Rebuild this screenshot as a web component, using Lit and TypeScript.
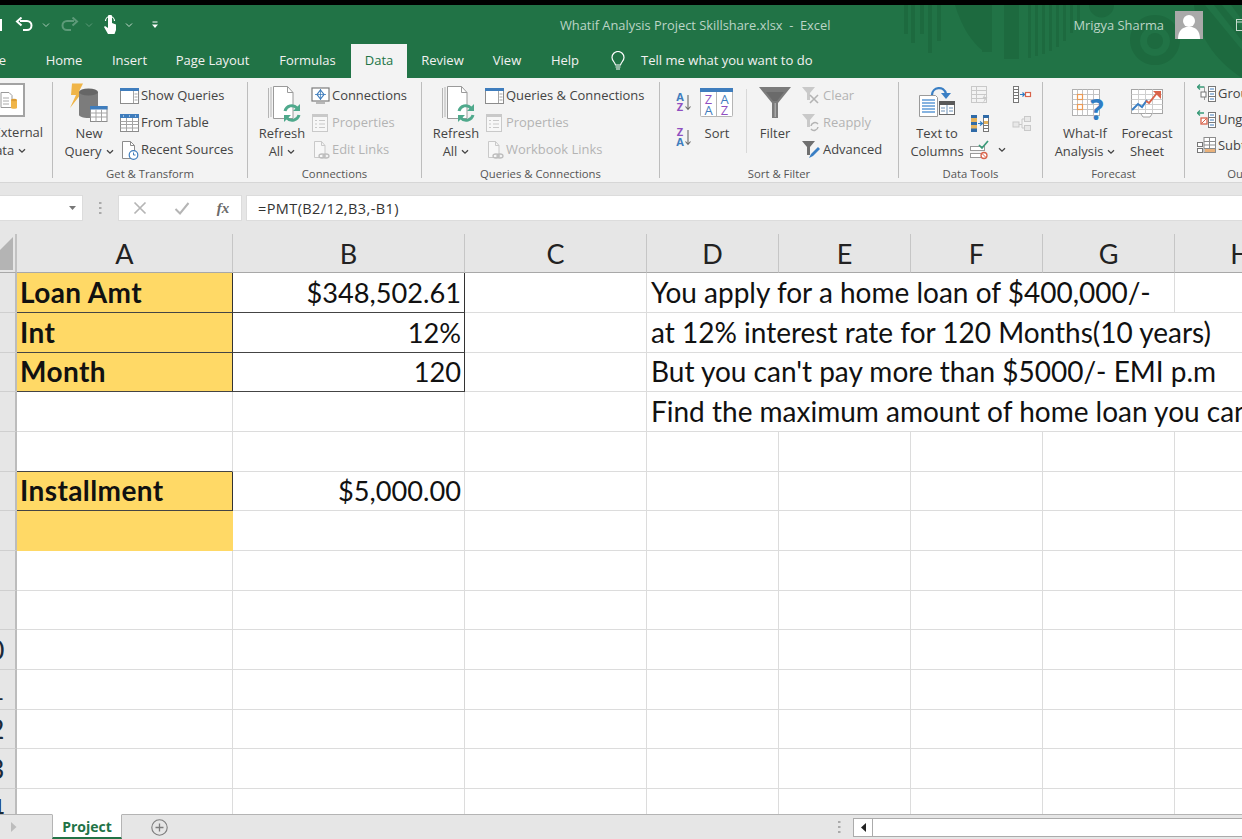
import { LitElement, html, css, svg } from "lit";
import { customElement } from "lit/decorators.js";

const chev = (c = "#444") => html`<svg class="chev" width="8" height="6" viewBox="0 0 8 6"><path d="M1 1.2 4 4.2 7 1.2" fill="none" stroke="${c}" stroke-width="1.3"/></svg>`;
const sm = (body: unknown) => html`<svg class="sm" width="20" height="20" viewBox="0 0 20 20">${body}</svg>`;
const big = (body: unknown) => html`<svg class="bigi" width="40" height="40" viewBox="0 0 40 40">${body}</svg>`;

const B = "#3f7dbd", G = "#8c8c8c", L = "#c9c9c9";

const icons: Record<string, unknown> = {
  showQueries: sm(svg`<rect x=".5" y="2.5" width="18" height="15" fill="#fff" stroke="${G}"/><rect y="2" width="19" height="3" fill="${B}"/><path d="M13.5 5v12M14.5 8h3M14.5 11h3M14.5 14h3" stroke="#a5a5a5" fill="none"/>`),
  fromTable: sm(svg`<rect x=".5" y="1.5" width="18" height="17" fill="#fff" stroke="${G}"/><rect y="1" width="19" height="4" fill="${B}"/><path d="M3 3h1M9 3h1M15 3h1" stroke="#fff"/><path d="M.5 8.5h18M.5 11.5h18M.5 15h18M6.5 5v13M12.5 5v13" stroke="#a5a5a5" fill="none"/>`),
  recent: sm(svg`<path d="M2.5 1.5h8l4 4v13h-12z" fill="#fff" stroke="${G}"/><path d="M10.5 1.5v4h4" fill="none" stroke="${G}"/><circle cx="13.5" cy="15" r="4.3" fill="#fff" stroke="${B}" stroke-width="1.2"/><path d="M13.5 12.5V15h2" stroke="${B}" fill="none"/>`),
  connections: sm(svg`<rect x="1" y="2" width="17" height="13" fill="#fff" stroke="#7d7d7d" stroke-width="1.2"/><path d="M9.5 4l3.5 4.5-3.5 4.5L6 8.5z" fill="#fff" stroke="${B}" stroke-width="1.2"/><path d="M9.5 3v11M4 8.5h11" stroke="${B}" stroke-width=".8"/><path d="M5 17h9" stroke="#7d7d7d"/>`),
  properties: sm(svg`<rect x="1.5" y="1.5" width="15" height="17" fill="#f7f7f7" stroke="${L}"/><rect x="1" y="1" width="16" height="3" fill="${L}"/><path d="M4 7.5h2M8 7.5h6M4 11h2M8 11h6M4 14.5h2M8 14.5h6" stroke="${L}"/>`),
  links: sm(svg`<path d="M3.5 1.5h7l3.5 4v12h-10.5z" fill="#f7f7f7" stroke="${L}"/><path d="M10.5 1.5v4h3.5" fill="none" stroke="${L}"/><ellipse cx="11" cy="16" rx="3" ry="2" fill="none" stroke="#bdbdbd" stroke-width="1.3"/><ellipse cx="15" cy="16" rx="3" ry="2" fill="none" stroke="#bdbdbd" stroke-width="1.3"/>`),
  clear: sm(svg`<path d="M0 1h13l-5 6v7H5V7z" fill="${L}"/><path d="M8 9l8 8M16 9l-8 8" stroke="#b3b3b3" stroke-width="1.6"/>`),
  reapply: sm(svg`<path d="M0 1h13l-5 6v7H5V7z" fill="${L}"/><path d="M9 13a4 4 0 0 1 7-2M16 14a4 4 0 0 1-7 2" fill="none" stroke="#b3b3b3" stroke-width="1.5"/>`),
  advanced: sm(svg`<path d="M0 1h13l-5 6v8H5V7z" fill="#6f6f6f"/><path d="M7 18l2-4 7-7 2 2-7 7z" fill="#3a7fc4"/>`),
  flash: sm(svg`<rect x="1.5" y=".5" width="15" height="16" fill="#f3f3f3" stroke="${L}"/><path d="M1.5 4.5h15M1.5 8.5h15M1.5 12.5h15M6.5 .5v16" stroke="${L}" fill="none"/><path d="M15 8l-3 5h2.5l-2 5 5-7h-3z" fill="${L}"/>`),
  dupes: sm(svg`<rect x="1" y="2" width="6" height="17" fill="#e4b25c"/><rect x="1" y="2" width="6" height="3" fill="#2f6aa7"/><rect x="1" y="9" width="6" height="3" fill="#2f6aa7"/><rect x="1" y="15.5" width="6" height="3.5" fill="#2f6aa7"/><rect x="13.5" y="2.5" width="5" height="16" fill="#fff" stroke="#777"/><rect x="13" y="2" width="6" height="3" fill="#2f6aa7"/><rect x="14" y="8" width="4" height="3" fill="#e4b25c"/><path d="M13.5 12.5h5M13.5 15.5h5" stroke="#777"/><path d="M8 10.5h3.5M10 8.5l2.5 2-2.5 2" stroke="#2f7dc4" fill="none" stroke-width="1.2"/>`),
  validate: sm(svg`<rect x=".5" y="6.5" width="14" height="4" fill="#fff" stroke="#9a9a9a"/><rect x=".5" y="13.5" width="12" height="4" fill="#fff" stroke="#9a9a9a"/><path d="M9 5l3 3 6-7" fill="none" stroke="#3a9a78" stroke-width="1.7"/><circle cx="14" cy="15.5" r="3" fill="#fff" stroke="#d9634a" stroke-width="1.3"/><path d="M12 13.5l4 4" stroke="#d9634a"/>`),
  consolidate: sm(svg`<rect x="1.5" y=".5" width="5" height="16" fill="#fff" stroke="#777"/><path d="M1.5 3.5h5M1.5 6.5h5M1.5 9.5h5M1.5 12.5h5" stroke="#777"/><path d="M8 8.5h4M10.5 6.5l2 2-2 2" stroke="#2f7dc4" stroke-width="1.2" fill="none"/><rect x="13.5" y="6.5" width="5" height="4" fill="#fff" stroke="#d9634a" stroke-width="1.2"/>`),
  relations: sm(svg`<rect x="1" y="9" width="6" height="5" fill="#e8e8e8" stroke="${L}"/><rect x="12.5" y="3.5" width="6" height="5" fill="#e8e8e8" stroke="${L}"/><rect x="12.5" y="12.5" width="6" height="5" fill="#e8e8e8" stroke="${L}"/><path d="M7 11.5h3V6h2.5M10 11.5V15h2.5" stroke="${L}" fill="none"/>`),
  group: sm(svg`<path d="M0 3h7M3 .5L.5 3 3 5.5" stroke="#3a9a78" fill="none" stroke-width="1.3"/><path d="M7.5 2.5V16M4.5 9.5h3" stroke="#9a9a9a" fill="none"/><rect x="4" y="8" width="5" height="5" fill="#fff" stroke="#777"/><rect x="11.5" y="2.5" width="7" height="15" fill="#fff" stroke="#777"/><path d="M11.5 7.5h7M11.5 12.5h7" stroke="#777"/><path d="M13 5h4M13 10h4M13 15h4" stroke="${B}"/>`),
  ungroup: sm(svg`<path d="M0 3h7M3 .5L.5 3 3 5.5" stroke="#3a9a78" fill="none" stroke-width="1.3"/><rect x="4" y="8" width="6" height="6" fill="#fff" stroke="#d9634a" stroke-width="1.3"/><path d="M4.5 13.5l5-5" stroke="#d9634a"/><rect x="11.5" y="2.5" width="7" height="15" fill="#fff" stroke="#777"/><path d="M11.5 7.5h7M11.5 12.5h7" stroke="#777"/><path d="M13 5h4M13 10h4M13 15h4" stroke="${B}"/>`),
  subtotal: sm(svg`<rect x=".5" y="6.5" width="5" height="4" fill="#fff" stroke="#777"/><rect x=".5" y="12.5" width="5" height="4" fill="#fff" stroke="#777"/><rect x="7" y="1.5" width="11.5" height="15" fill="#fff" stroke="#8c8c8c"/><path d="M7 5.5h11.5M7 9h11.5M7 12.5h11.5M12.5 1.5v15" stroke="#8c8c8c"/><rect x="8" y="13" width="10" height="3" fill="#e9b17a"/>`),
  az: html`<svg class="azi" width="20" height="20" viewBox="0 0 20 20"><text x="8" y="9" class="ltr" fill="#3f7dbd">A</text><text x="8" y="18.5" class="ltr" fill="#8f4fc0">Z</text><path d="M16 3v14M13.5 14.5 16 17.5l2.5-3" fill="none" stroke="#6a6a6a" stroke-width="1.1"/></svg>`,
  za: html`<svg class="azi" width="20" height="20" viewBox="0 0 20 20"><text x="8" y="9" class="ltr" fill="#8f4fc0">Z</text><text x="8" y="18.5" class="ltr" fill="#3f7dbd">A</text><path d="M16 3v14M13.5 14.5 16 17.5l2.5-3" fill="none" stroke="#6a6a6a" stroke-width="1.1"/></svg>`,
  newQuery: big(svg`<path d="M3 .5h11l-4 8h4L1 25l6-13H2z" fill="#f0b548"/><path d="M10 9v23c0 1.5 4 3 9.5 3s9.5-1.5 9.5-3V9z" fill="#7c7c7c"/><ellipse cx="19.5" cy="9" rx="9.5" ry="3.5" fill="#666"/><rect x="21.5" y="23.5" width="16.5" height="15" fill="#fff" stroke="#8c8c8c"/><rect x="21" y="23" width="17.5" height="3.5" fill="#3f7dbd"/><path d="M21.5 30h16.5M21.5 34h16.5M27 26.5v12M32.5 26.5v12" stroke="#a5a5a5"/>`),
  refresh: big(svg`<path d="M6.5 5v30M9 4v30" stroke="#b5b5b5" fill="none"/><path d="M11.5 3.5h14l5.5 6v26h-19.5z" fill="#fff" stroke="#9a9a9a"/><path d="M25.5 3.5v6h5.5" fill="none" stroke="#9a9a9a"/><path d="M23 28a7 7 0 0 1 12-3" fill="none" stroke="#4fa98c" stroke-width="3"/><path d="M38 21v7h-7z" fill="#4fa98c"/><path d="M37 32a7 7 0 0 1-12 3" fill="none" stroke="#4fa98c" stroke-width="3"/><path d="M22 39v-7h7z" fill="#4fa98c"/>`),
  sortBig: big(svg`<rect x="3.5" y="5.5" width="32" height="28" rx="1" fill="#fff" stroke="#b5b5b5"/><rect x="3" y="5" width="33" height="4" fill="#3f7dbd"/><path d="M19.5 9v24" stroke="#b5b5b5"/><text x="11.5" y="20.5" class="lt2" fill="#8f4fc0">Z</text><text x="11.5" y="32" class="lt2" fill="#3f7dbd">A</text><text x="27.5" y="20.5" class="lt2" fill="#3f7dbd">A</text><text x="27.5" y="32" class="lt2" fill="#8f4fc0">Z</text>`),
  funnel: big(svg`<path d="M4 4h32L23 20v15h-6V20z" fill="#7b7b7b"/><path d="M11 9h18l-7 9h-4z" fill="#6a6a6a"/><path d="M19.5 20h1.5v14h-1.5z" fill="#a8a8a8"/>`),
  t2c: big(svg`<path d="M2.5 12.5h16l2 2v19h-18z" fill="#fff" stroke="#9a9a9a"/><path d="M5 17h13M5 20h13M5 23h13M5 26h13M5 29h13" stroke="#5f9bd6" stroke-width="1.3"/><path d="M15 12C15 4 27 2 29 11" fill="none" stroke="#3a7fc4" stroke-width="2.3"/><path d="M24 10h10l-5 6z" fill="#3a7fc4"/><rect x="22.5" y="18.5" width="15" height="13" fill="#fff" stroke="#6a6a6a"/><rect x="22" y="18" width="16" height="4" fill="#5a5a5a"/><path d="M30 22v9M24 25h4M32 25h4M24 28h4M32 28h4" stroke="#6a8fb5"/>`),
  whatif: big(svg`<rect x="7.5" y="6.5" width="27" height="26" fill="#fff" stroke="#b0b0b0"/><path d="M7.5 11.5h27M7.5 16.5h27M7.5 21.5h27M7.5 26.5h27M12.5 6.5v26M17.5 6.5v26M22.5 6.5v26M28.5 6.5v26" stroke="#c4c4c4"/><rect x="12.5" y="11.5" width="5" height="5" fill="#fff" stroke="#ec9a54" stroke-width="1.2"/><rect x="12.5" y="21.5" width="5" height="5" fill="#fff" stroke="#ec9a54" stroke-width="1.2"/><text x="32" y="37" class="q">?</text>`),
  forecast: big(svg`<rect x="4.5" y="6.5" width="31" height="24" fill="#fff" stroke="#a5a5a5"/><path d="M4.5 11.5h31M4.5 16.5h31M4.5 21.5h31M4.5 26.5h31M11.5 6.5v24M18.5 6.5v24M25.5 6.5v24" stroke="#cfcfcf"/><path d="M5 27l6-6 4 3 5-7" fill="none" stroke="#3a7fc4" stroke-width="2"/><path d="M19 18l3 2 8-10" fill="none" stroke="#d9634a" stroke-width="2"/><path d="M26 8h8v8z" fill="#d9634a"/><path d="M14 31l2 3h7l2-3" fill="#fff" stroke="#a5a5a5"/>`),
  external: big(svg`<rect x="11" y="1" width="27" height="32" fill="#fff" stroke="#a3a3a3" stroke-width="2"/><path d="M15 9.5h8l3 3v12H15z" fill="#fff" stroke="#9a9a9a"/><path d="M17 15h6M17 18h6M17 21h6" stroke="#aaa"/><path d="M25 17h6v8c0 1-6 1-6 0z" fill="#f0b548"/><ellipse cx="28" cy="17" rx="3" ry="1.3" fill="#dc9c33"/>`),
};

type Item = { label: string; icon: string; off?: boolean };
const col = (items: Item[]) => html`<div class="col">${items.map(
  (i) => html`<div class="row ${i.off ? "off" : ""}">${icons[i.icon]}<span>${i.label}</span></div>`
)}</div>`;
const bigBtn = (cls: string, icon: string, l1: string, l2: string, drop = false) => html`
  <div class="big ${cls}">${icons[icon]}<span class="ln">${l1}</span><span class="ln">${l2}${drop ? chev() : ""}</span></div>`;

const tabs = [
  { t: "Home", w: 68 }, { t: "Insert", w: 63 }, { t: "Page Layout", w: 103 }, { t: "Formulas", w: 87 },
  { t: "Data", w: 56, on: true }, { t: "Review", w: 71 }, { t: "View", w: 58 }, { t: "Help", w: 58 },
];

type Cell = { t?: string; k?: string };
const rows: Cell[][] = [
  [{ t: "Loan Amt", k: "lab dark" }, { t: "$348,502.61", k: "num dark" }, {}, { t: "You apply for a home loan of $400,000/-", k: "s4" }, {}],
  [{ t: "Int", k: "lab dark" }, { t: "12%", k: "num dark" }, {}, { t: "at 12% interest rate for 120 Months(10 years)", k: "s5" }],
  [{ t: "Month", k: "lab dark" }, { t: "120", k: "num dark" }, {}, { t: "But you can't pay more than $5000/- EMI p.m", k: "s5" }],
  [{}, {}, {}, { t: "Find the maximum amount of home loan you can get", k: "s5" }],
  [{ k: "botdark" }, {}, {}, {}, {}, {}, {}, {}],
  [{ t: "Installment", k: "lab dark" }, { t: "$5,000.00", k: "num" }, {}, {}, {}, {}, {}, {}],
  [{ k: "fill" }, {}, {}, {}, {}, {}, {}, {}],
];
while (rows.length < 15) rows.push([{}, {}, {}, {}, {}, {}, {}, {}]);

@customElement("app-root")
export class AppRoot extends LitElement {
  static styles = css`
    :host { display: block; width: 1242px; height: 839px; overflow: hidden; position: relative; background: #fff;
      font-family: "Open Sans", "Noto Sans", sans-serif; color: #444; }
    .app { display: flex; flex-direction: column; height: 839px; }
    .black { height: 5px; background: #000; flex: none; }
    .green { background: #217346; position: relative; flex: none; height: 73px; overflow: hidden; }
    .pattern { position: absolute; left: 0; top: 0; }
    .title { position: relative; height: 39px; display: flex; align-items: center; color: #fff; }
    .qat { width: 560px; flex: none; display: flex; align-items: center; position: relative; height: 39px; }
    .qat svg { flex: none; }
    .m0 { margin-left: -4px; } .m1 { margin-left: 9px; } .m2 { margin-left: 11px; } .m3 { margin-left: 6px; }
    .m4 { margin-left: 7px; } .m5 { margin-left: 18px; }
    .doc { font-size: 12.85px; color: #bcd5c6; white-space: pre; }
    .user { margin-left: auto; display: flex; align-items: center; font-size: 12.9px; color: #bcd5c6; }
    .avatar { width: 28px; height: 28px; margin-left: 11px; background: #a9a9a9; display: block; }
    .restore { margin-left: 33px; margin-right: -8px; }
    .tabs { position: relative; height: 34px; display: flex; font-size: 13px; color: #f1f1f1; }
    .tab { flex: none; display: flex; align-items: center; justify-content: center; padding-bottom: 2px; box-sizing: border-box; white-space: nowrap; }
    .tab.file { width: 30px; justify-content: flex-end; padding-right: 24px; }
    .tab.on { background: #f3f3f3; color: #217346; }
    .bulb { margin-left: 16px; margin-right: 15px; align-self: center; }
    .tell { align-self: center; padding-bottom: 2px; font-size: 13.05px; }
    .ribbon { flex: none; height: 105px; box-sizing: border-box; background: #f3f3f3; border-bottom: 1px solid #d6d6d6; display: flex; padding-top: 4px; overflow: hidden; font-size: 12.95px; }
    .grp { flex: none; height: 96px; box-sizing: border-box; border-right: 1px solid #bdbdbd; display: flex; flex-direction: column; }
    .grp.last { border: 0; }
    .body { height: 86px; display: flex; flex: none; white-space: nowrap; }
    .glabel { font-size: 11.3px; line-height: 12px; height: 10px; text-align: center; color: #555; white-space: nowrap; }
    .big { flex: none; display: flex; flex-direction: column; align-items: center; line-height: 18px; color: #444; }
    .big .ln { display: block; white-space: nowrap; }
    .bigi { display: block; flex: none; margin: 1px 0 1px; }
    .chev { margin-left: 4px; vertical-align: 1px; }
    .col { display: flex; flex-direction: column; flex: none; }
    .row { height: 27px; display: flex; align-items: center; gap: 1px; }
    .row span { margin-top: -2px; }
    .off { color: #b3b3b3; }
    .sm { flex: none; display: block; }
    .ltr { font: bold 11px "Open Sans", sans-serif; text-anchor: middle; }
    .lt2 { font: 13px "Open Sans", sans-serif; text-anchor: middle; }
    .q { font: bold 28px "Open Sans", sans-serif; fill: #2f7dc4; text-anchor: middle; }
    .ext { width: 92px; margin-left: -40px; }
    .ext .ln { position: relative; top: -1px; }
    .g1 { padding-left: 8px; } .g1 .big { width: 56px; } .g1 .col { margin-left: 3px; }
    .g2 { padding-left: 6px; } .g2 .big { width: 56px; } .g2 .col { margin-left: 1px; }
    .g4 { padding-left: 12px; }
    .azc { width: 25px; flex: none; display: flex; flex-direction: column; padding-top: 10px; gap: 15px; align-items: flex-start; }
    .azi { display: block; }
    .s40 { width: 40px; }
    .vdiv { width: 1px; height: 64px; margin: 7px 8px 0 9px; background: #d8d8d8; flex: none; }
    .g4 .col { margin-left: 7px; }
    .g5 { padding-left: 8px; } .t2c { width: 60px; } .g5 .col { width: 42px; margin-left: 3px; }
    .g5 .col + .col { margin-left: 0; width: 22px; }
    .g5 .row .chev { margin-left: 7px; }
    .g6 { padding-left: 11px; } .g6 .big { width: 62px; }
    .g7 { padding-left: 12px; }
    .g7 .col { margin-top: -1px; }
    .g7 .row { height: 26px; }
    .fbar { flex: none; height: 51px; box-sizing: border-box; padding-top: 12px; background: #e6e6e6; display: flex; align-items: flex-start; }
    .namebox { width: 83px; height: 26px; background: #fff; display: flex; align-items: center; justify-content: flex-end; padding-right: 6px; box-sizing: border-box; border: 1px solid #dcdcdc; border-left: 0; }
    .dots { width: 35px; display: flex; justify-content: center; height: 26px; align-items: center; }
    .fbtns { width: 124px; height: 26px; background: #fff; position: relative; box-sizing: border-box; display: grid; grid-template-columns: 42px 42px 40px; align-items: center; justify-items: center; border: 1px solid #dcdcdc; }
    .fx { font: italic bold 15px "Liberation Serif", serif; color: #6a6a6a; }
    .finput { margin-left: 4px; flex: 1; height: 26px; box-sizing: border-box; background: #fff; font-size: 14.5px; letter-spacing: .4px; color: #333; display: flex; align-items: center; padding: 1px 0 0 11px; border: 1px solid #dcdcdc; border-right: 0; }
    .sheet { flex: 1; overflow: hidden; min-height: 0; }
    .grid { display: grid; width: 1307px; grid-template-columns: 17px 216px 232px 182px 132px 132px 132px 132px 132px; grid-template-rows: 39.2px; grid-auto-rows: 39.68px; font-family: Lato, "Open Sans", sans-serif; font-size: 28px; color: #111; }
    .corner { background: #e6e6e6; border-right: 2px solid #c2c2c2; border-bottom: 1px solid #a8a8a8; box-sizing: border-box; overflow: hidden; display: block; }
    .ch { background: #e6e6e6; border-right: 1px solid #c6c6c6; border-bottom: 1px solid #a8a8a8; box-sizing: border-box; display: flex; align-items: center; justify-content: center; font-size: 27px; color: #222; }
    .rh { background: #e6e6e6; border-right: 2px solid #bcbcbc; border-bottom: 1px solid #cfcfcf; box-sizing: border-box; overflow: hidden; display: flex; align-items: center; color: #1a2a3a; font-size: 27px; }
    .rh span { flex: none; width: 28px; margin-left: -27px; text-align: center; }
    .c { border-right: 1px solid #dcdcdc; border-bottom: 1px solid #dcdcdc; box-sizing: border-box; display: flex; align-items: center; padding: 0 4px 1px; white-space: nowrap; overflow: hidden; min-width: 0; }
    .lab { background: #ffd966; font-weight: 700; justify-content: flex-start; letter-spacing: .4px; padding-left: 3px; }
    .num { justify-content: flex-end; font-size: 27.2px; padding-right: 3px; padding-bottom: 0; }
    .dark { border-right-color: #333; border-bottom-color: #444; }
    .botdark { border-bottom-color: #444; }
    .fill { background: #ffd966; border-color: #ffd966; }
    .s4 { grid-column: span 4; }
    .s5 { grid-column: span 5; }
    .bottom { flex: none; height: 25px; box-sizing: border-box; background: #e6e6e6; border-top: 1px solid #b4b4b4; display: flex; align-items: stretch; }
    .prev { width: 52px; flex: none; display: flex; align-items: center; padding-left: 11px; box-sizing: border-box; }
    .stab { width: 70px; flex: none; box-sizing: border-box; background: #fff; margin-top: -1px; border: 1px solid #b4b4b4; border-top-color: #fff; border-bottom: 2px solid #217346; color: #217346; font-weight: 700; font-size: 14px; display: flex; align-items: center; justify-content: center; }
    .plus { margin-left: 29px; flex: none; align-self: center; }
    .bdots { margin-left: auto; width: 28px; display: flex; align-items: center; justify-content: center; }
    .hs { width: 389px; flex: none; margin-top: 3px; height: 19px; box-sizing: border-box; border: 1px solid #ababab; border-right: 0; background: #fff; display: flex; }
    .hsb { width: 19px; border-right: 1px solid #ababab; display: flex; align-items: center; justify-content: center; flex: none; box-sizing: border-box; }
  `;

  render() {
    const letters = ["A", "B", "C", "D", "E", "F", "G", "H"];
    return html`<div class="app">
      <div class="black"></div>
      <div class="green">
        <svg class="pattern" width="1242" height="73" viewBox="0 5 1242 73" fill="#1d6a3f">
          <rect x="904" y="5" width="4" height="29"/><rect x="911" y="5" width="4" height="38"/><rect x="920" y="5" width="4" height="29"/><rect x="928" y="5" width="4" height="48"/><rect x="937" y="5" width="4" height="36"/>
          <path d="M955 5C962 28 972 42 982 50V5zM982 5h10v47h-10zM1004 5h15v54h-15zM1028 5h3v53h-3zM1035 5h3v51h-3zM1042 5h3v49h-3zM1049 5h3v46h-3zM1056 5h3v42h-3zM1063 5h3v36h-3zM1070 5h3v28h-3zM1077 5h3v18h-3z"/>
          <path d="M1089 5h25a12 12 0 0 1-25 0z"/>
          <path fill-rule="evenodd" d="M1155 15a25 25 0 1 0 .01 0zM1155 26a15 15 0 1 1-.01 0z"/>
          <circle cx="1155" cy="41" r="8"/>
          <path d="M1194 5c3 28 20 55 48 73V5z"/>
          <path d="M1205 5l37 45v-9L1214 5zM1222 5l20 24v-9L1231 5z" fill="#217346"/>
        </svg>
        <div class="title">
          <div class="qat">
            <svg class="m0" width="10" height="16" viewBox="0 0 10 16"><rect x="3" y="2" width="3" height="12" fill="#fff"/></svg>
            <svg class="m1" width="18" height="16" viewBox="0 0 18 16"><path d="M5 4h7a4.5 4.5 0 0 1 0 9H8" fill="none" stroke="#fff" stroke-width="2"/><path d="M6.5 .5L2 4.5l4.5 4" fill="none" stroke="#fff" stroke-width="2"/></svg>
            <svg class="m1" width="8" height="6" viewBox="0 0 8 6"><path d="M1 1.5l3 3 3-3" fill="none" stroke="#a9c9b7"/></svg>
            <svg class="m2" width="18" height="16" viewBox="0 0 18 16"><path d="M13 4H6a4.5 4.5 0 0 0 0 9h4" fill="none" stroke="#5d9a79" stroke-width="2"/><path d="M11.5 .5l4.5 4-4.5 4" fill="none" stroke="#5d9a79" stroke-width="2"/></svg>
            <svg class="m3" width="8" height="6" viewBox="0 0 8 6"><path d="M1 1.5l3 3 3-3" fill="none" stroke="#5d9a79"/></svg>
            <svg class="m1" width="16" height="20" viewBox="0 0 16 20"><path d="M6 1.5a2 2 0 0 1 4 0V8l4 1.5V15l-1.5 4H6L2 12l1-1 3 2z" fill="#fff"/><path d="M3.5 6a4.5 4.5 0 0 1 9 0" fill="none" stroke="#fff" stroke-width="1.2"/></svg>
            <svg class="m4" width="8" height="6" viewBox="0 0 8 6"><path d="M1 1.5l3 3 3-3" fill="none" stroke="#c8dccf"/></svg>
            <svg class="m5" width="8" height="8" viewBox="0 0 8 8"><path d="M1.5 1h5" stroke="#fff"/><path d="M1 3.5h6L4 7z" fill="#fff"/></svg>
          </div>
          <div class="doc">Whatif Analysis Project Skillshare.xlsx  -  Excel</div>
          <div class="user">Mrigya Sharma
            <svg class="avatar" viewBox="0 0 28 28"><rect width="28" height="28" fill="#a9a9a9"/><circle cx="14" cy="10" r="6" fill="#fff"/><path d="M3 28c0-9 5-11 8-12h6c3 1 8 3 8 12z" fill="#fff"/></svg>
            <svg class="restore" width="14" height="12" viewBox="0 0 14 12"><rect x=".5" y=".5" width="13" height="11" fill="none" stroke="#c8dccf"/><path d="M.5 3h13" stroke="#c8dccf"/></svg>
          </div>
        </div>
        <div class="tabs">
          <div class="tab file">File</div>
          ${tabs.map((t) => html`<div class="tab ${t.on ? "on" : ""}" style="width:${t.w}px">${t.t}</div>`)}
          <svg class="bulb" width="16" height="21" viewBox="0 0 16 21"><path d="M5.5 14C5 11 2 10 2 6.5a6 6 0 0 1 12 0C14 10 11 11 10.5 14z" fill="none" stroke="#fff" stroke-width="1.2"/><path d="M5.5 16h5M6 18h4" stroke="#fff" stroke-width="1.2"/></svg>
          <div class="tell">Tell me what you want to do</div>
        </div>
      </div>

      <div class="ribbon">
        <div class="grp" style="width:53px"><div class="body">
          <div class="big ext">${icons.external}<span class="ln">Get External</span><span class="ln">Data${chev()}</span></div>
        </div></div>
        <div class="grp" style="width:195px"><div class="body g1">
          ${bigBtn("", "newQuery", "New", "Query", true)}
          ${col([{ label: "Show Queries", icon: "showQueries" }, { label: "From Table", icon: "fromTable" }, { label: "Recent Sources", icon: "recent" }])}
        </div><div class="glabel">Get &amp; Transform</div></div>
        <div class="grp" style="width:174px"><div class="body g2">
          ${bigBtn("", "refresh", "Refresh", "All", true)}
          ${col([{ label: "Connections", icon: "connections" }, { label: "Properties", icon: "properties", off: true }, { label: "Edit Links", icon: "links", off: true }])}
        </div><div class="glabel">Connections</div></div>
        <div class="grp" style="width:238px"><div class="body g2">
          ${bigBtn("", "refresh", "Refresh", "All", true)}
          ${col([{ label: "Queries & Connections", icon: "showQueries" }, { label: "Properties", icon: "properties", off: true }, { label: "Workbook Links", icon: "links", off: true }])}
        </div><div class="glabel">Queries &amp; Connections</div></div>
        <div class="grp" style="width:239px"><div class="body g4">
          <div class="azc">${icons.az}${icons.za}</div>
          ${bigBtn("s40", "sortBig", "Sort", "")}
          <div class="vdiv"></div>
          ${bigBtn("s40", "funnel", "Filter", "")}
          ${col([{ label: "Clear", icon: "clear", off: true }, { label: "Reapply", icon: "reapply", off: true }, { label: "Advanced", icon: "advanced" }])}
        </div><div class="glabel">Sort &amp; Filter</div></div>
        <div class="grp" style="width:144px"><div class="body g5">
          ${bigBtn("t2c", "t2c", "Text to", "Columns")}
          <div class="col">
            <div class="row">${icons.flash}</div>
            <div class="row">${icons.dupes}</div>
            <div class="row">${icons.validate}${chev()}</div>
          </div>
          <div class="col">
            <div class="row">${icons.consolidate}</div>
            <div class="row">${icons.relations}</div>
          </div>
        </div><div class="glabel">Data Tools</div></div>
        <div class="grp" style="width:142px"><div class="body g6">
          ${bigBtn("", "whatif", "What-If", "Analysis", true)}
          ${bigBtn("", "forecast", "Forecast", "Sheet")}
        </div><div class="glabel">Forecast</div></div>
        <div class="grp last" style="width:123px"><div class="body g7">
          ${col([{ label: "Group", icon: "group" }, { label: "Ungroup", icon: "ungroup" }, { label: "Subtotal", icon: "subtotal" }])}
        </div><div class="glabel">Outline</div></div>
      </div>

      <div class="fbar">
        <div class="namebox"><svg width="7" height="4" viewBox="0 0 7 4"><path d="M0 0h7L3.5 4z" fill="#777"/></svg></div>
        <div class="dots"><svg width="3" height="12" viewBox="0 0 3 12"><path d="M0 1h2.5M0 6h2.5M0 11h2.5" stroke="#aaa" stroke-width="2"/></svg></div>
        <div class="fbtns">
          <svg width="14" height="14" viewBox="0 0 14 14"><path d="M1.5 1.5l11 11M12.5 1.5l-11 11" stroke="#b5b5b5" stroke-width="1.7"/></svg>
          <svg width="16" height="14" viewBox="0 0 16 14"><path d="M1.5 8l4.5 4.5L14.5 2" fill="none" stroke="#b5b5b5" stroke-width="2"/></svg>
          <span class="fx">fx</span>
        </div>
        <div class="finput">=PMT(B2/12,B3,-B1)</div>
      </div>

      <div class="sheet"><div class="grid">
        <div class="corner"><svg width="14" height="38" viewBox="0 0 14 38"><path d="M13 3v33H-20z" fill="#b4b4b4"/></svg></div>
        ${letters.map((l) => html`<div class="ch">${l}</div>`)}
        ${rows.map((r, i) => html`<div class="rh"><span>${i + 1}</span></div>${r.map((c) => html`<div class="c ${c.k ?? ""}">${c.t ?? ""}</div>`)}`)}
      </div></div>

      <div class="bottom">
        <div class="prev"><svg width="6" height="10" viewBox="0 0 6 10"><path d="M0 0l5.5 5L0 10z" fill="#bdbdbd"/></svg></div>
        <div class="stab">Project</div>
        <svg class="plus" width="17" height="17" viewBox="0 0 17 17"><circle cx="8.5" cy="8.5" r="7.7" fill="none" stroke="#7d7d7d" stroke-width="1.1"/><path d="M8.5 4.5v8M4.5 8.5h8" stroke="#7d7d7d" stroke-width="1.3"/></svg>
        <div class="bdots"><svg width="3" height="12" viewBox="0 0 3 12"><path d="M0 1h2.5M0 6h2.5M0 11h2.5" stroke="#aaa" stroke-width="2"/></svg></div>
        <div class="hs"><div class="hsb"><svg width="5" height="9" viewBox="0 0 5 9"><path d="M5 0v9L0 4.5z" fill="#222"/></svg></div></div>
      </div>
    </div>`;
  }
}
